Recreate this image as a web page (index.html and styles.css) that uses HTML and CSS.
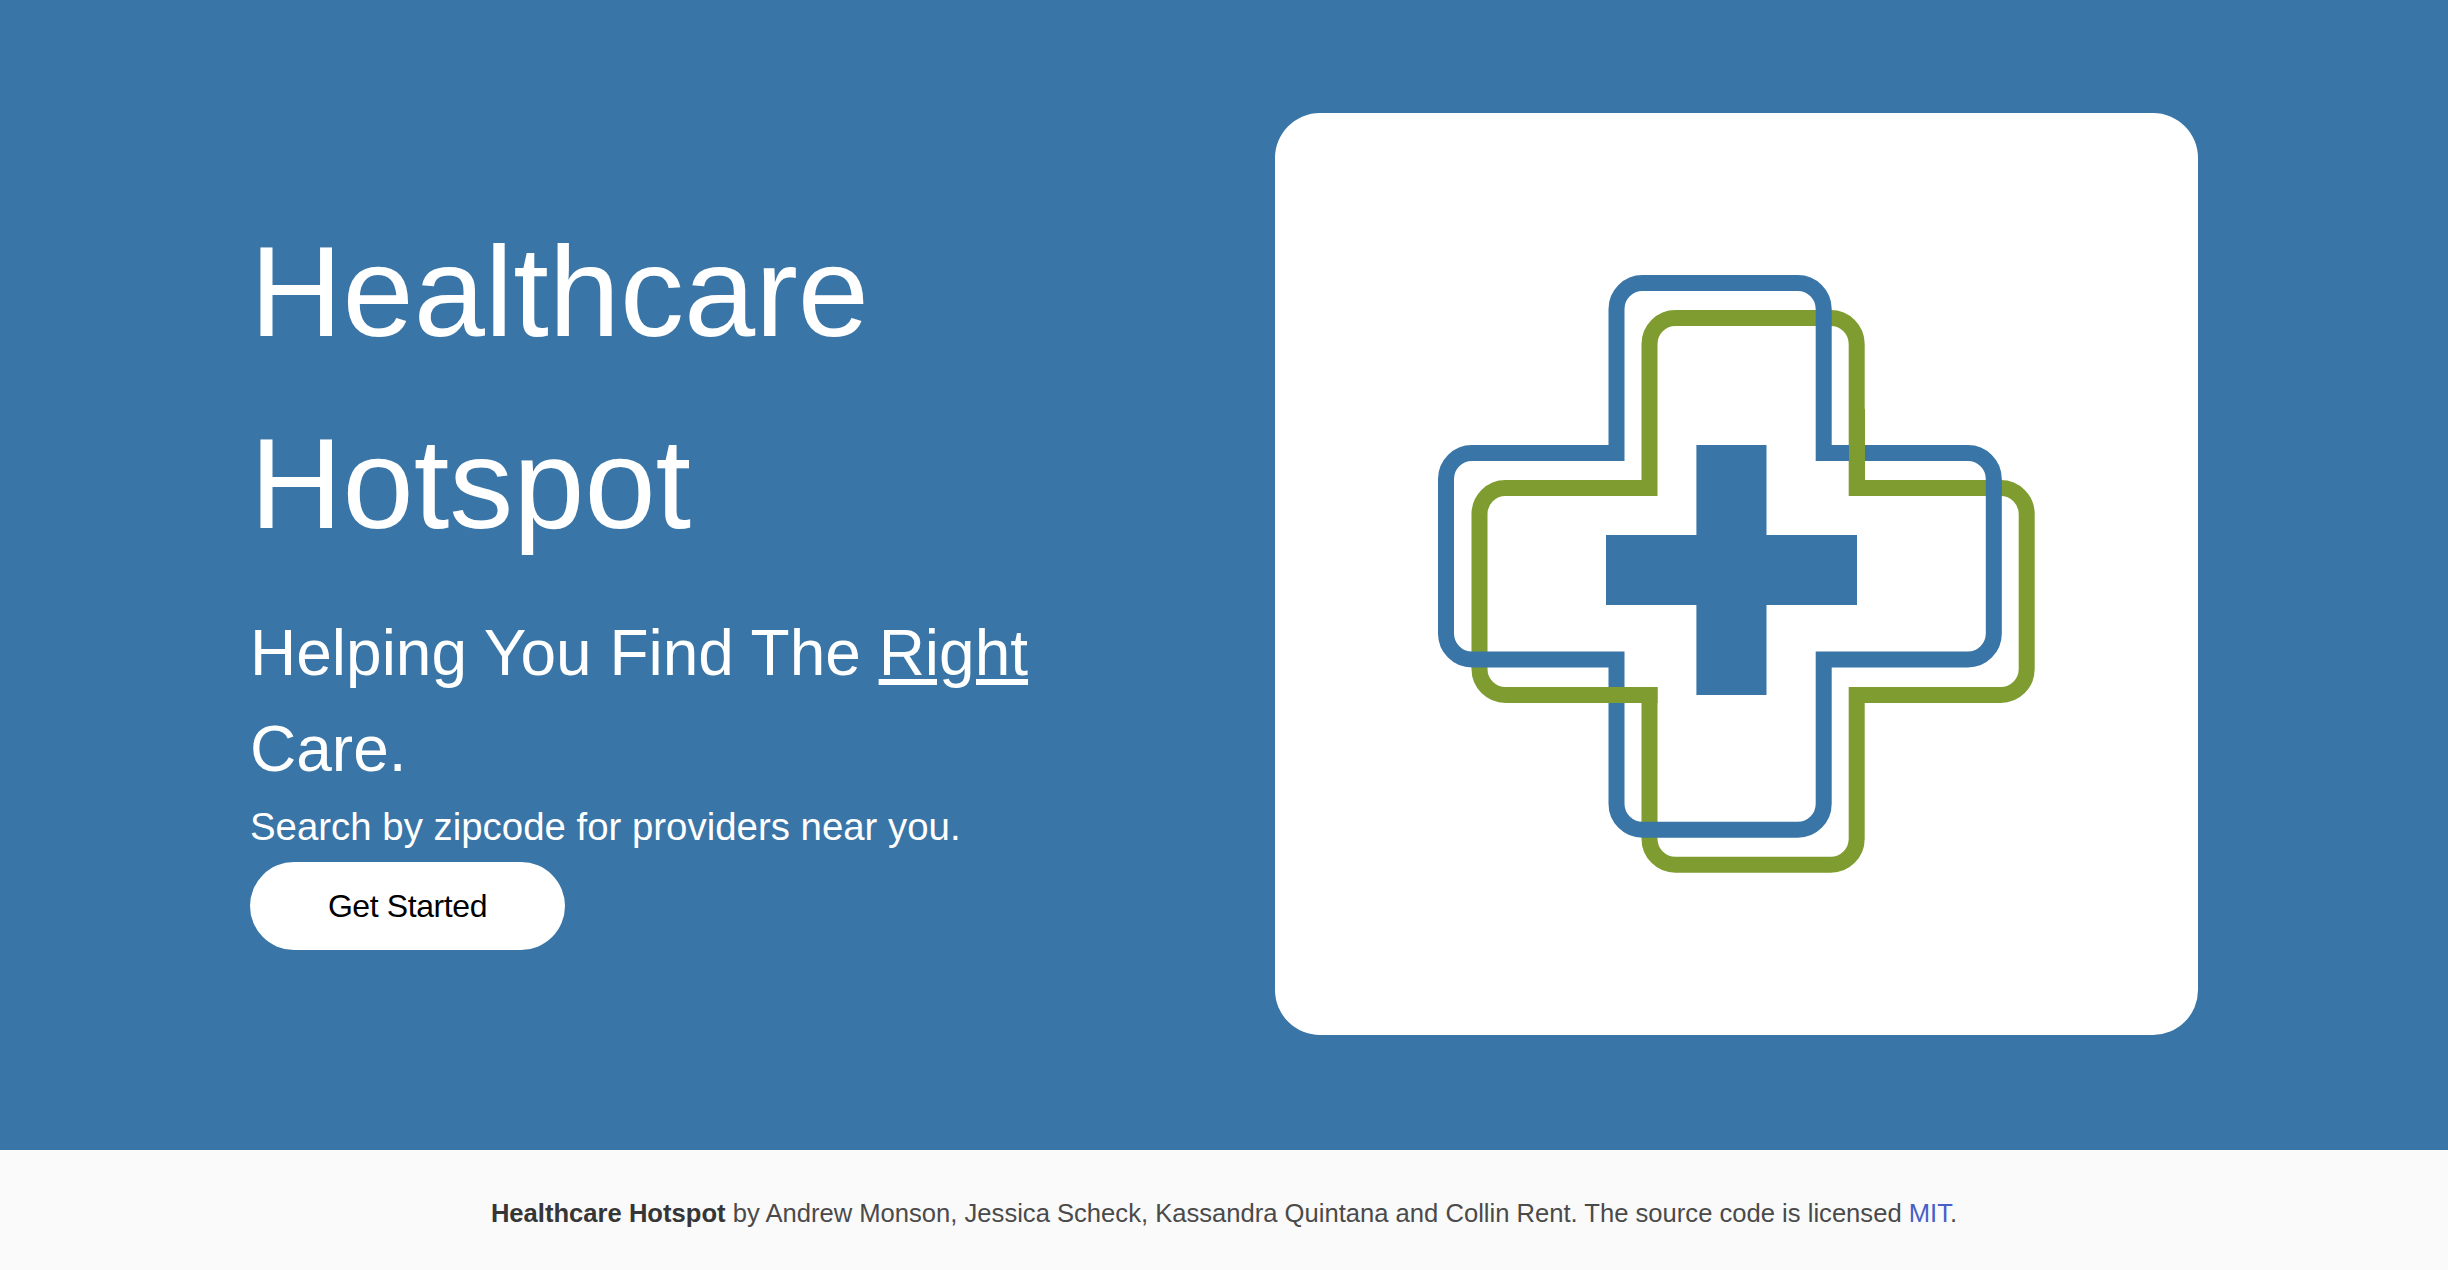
FILE: index.html
```html
<!DOCTYPE html>
<html lang="en">
<head>
	<meta charset="UTF-8">
	<title>Healthcare Hotspot</title>
	<link rel="stylesheet" href="styles.css">
</head>
<body>
	<section class="hero">
		<div class="hero-text">
			<h1 class="title">Healthcare Hotspot</h1>
			<h2 class="subtitle">Helping You Find The <u>Right</u> Care.</h2>
			<p class="lead">Search by zipcode for providers near you.</p>
			<a class="button" href="#">Get Started</a>
		</div>
		<div class="card">
			<svg class="logo" viewBox="1275 113 923 922" xmlns="http://www.w3.org/2000/svg">
				<path class="line green" d="M1649.5 488V344a26 26 0 0 1 26-26H1830.7a26 26 0 0 1 26 26V488H2000.7a26 26 0 0 1 26 26V669a26 26 0 0 1-26 26H1856.7V838.7a26 26 0 0 1-26 26H1675.5a26 26 0 0 1-26-26V695H1505.5a26 26 0 0 1-26-26V514a26 26 0 0 1 26-26Z"/>
				<path class="line blue" d="M1616.5 453V309a26 26 0 0 1 26-26H1797.7a26 26 0 0 1 26 26V453H1967.8a26 26 0 0 1 26 26V633.5a26 26 0 0 1-26 26H1823.7V803.7a26 26 0 0 1-26 26H1642.5a26 26 0 0 1-26-26V659.5H1472a26 26 0 0 1-26-26V479a26 26 0 0 1 26-26Z"/>
				<!-- green runs over blue at these two crossings -->
				<path class="line green" d="M1857 409V496"/>
				<path class="line green" d="M1560 695H1657.5"/>
				<path class="plus" d="M1696.4 445H1766.5V535H1857V605H1766.5V695H1696.4V605H1606V535H1696.4Z"/>
			</svg>
		</div>
	</section>
	<footer class="footer">
		<p><strong>Healthcare Hotspot</strong> by Andrew Monson, Jessica Scheck, Kassandra Quintana and Collin Rent. The source code is licensed <a href="#">MIT</a>.</p>
	</footer>
</body>
</html>
```

FILE: styles.css
```css
* {
	box-sizing: border-box;
}
body {
	margin: 0;
	font-family: "Liberation Sans", Arial, sans-serif;
	background: #fafafa;
}
.hero {
	display: flex;
	justify-content: space-between;
	align-items: center;
	padding: 113px 250px 115px;
	background: #3975a6;
	color: #fff;
}
.hero-text {
	width: 860px;
	margin-bottom: 2px;
}
.title {
	margin: 0 0 25px;
	font-size: 128px;
	font-weight: 400;
	line-height: 1.5;
}
.subtitle {
	margin: 0;
	font-size: 64px;
	font-weight: 400;
	line-height: 1.5;
}
.lead {
	margin: 0 0 5px;
	font-size: 38.4px;
	line-height: 60px;
}
.button {
	display: block;
	width: 315px;
	height: 88px;
	border-radius: 44px;
	background: #fff;
	color: #000;
	font-size: 32px;
	letter-spacing: -0.4px;
	line-height: 88px;
	text-align: center;
	text-decoration: none;
}
.card {
	width: 923px;
	height: 922px;
	border-radius: 45px;
	background: #fff;
}
.logo {
	display: block;
	width: 100%;
	height: 100%;
}
.line {
	fill: none;
	stroke-width: 16;
}
.blue {
	stroke: #3975a6;
}
.green {
	stroke: #7e9c30;
}
.plus {
	fill: #3975a6;
}
.footer {
	padding: 51px 24px 45px;
	background: #fafafa;
	color: #4a4a4a;
	font-size: 25.6px;
	line-height: 24px;
	text-align: center;
}
.footer p {
	margin: 0;
}
.footer strong {
	color: #363636;
}
.footer a {
	color: #485fc7;
	text-decoration: none;
}
```
